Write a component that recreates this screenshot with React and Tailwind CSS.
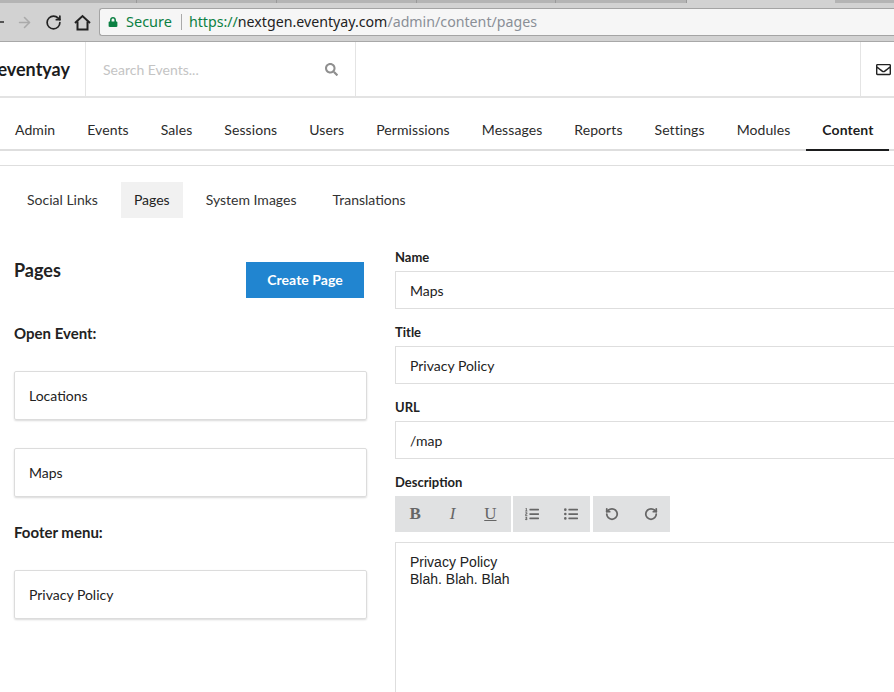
import React from 'react';
import { ArrowRight, RotateCw, RotateCcw } from 'lucide-react';
import { FaLock, FaSearch, FaRegEnvelope, FaListOl, FaListUl } from 'react-icons/fa';

const menu = ['Admin', 'Events', 'Sales', 'Sessions', 'Users', 'Permissions', 'Messages', 'Reports', 'Settings', 'Modules', 'Content'];
const subMenu = ['Social Links', 'Pages', 'System Images', 'Translations'];

const HomeIcon = () => (
    <svg width="17" height="17" viewBox="0 0 17 17" fill="none" stroke="#222" strokeWidth="2" className="ml-[12px]">
        <path d="M1 9 L8.5 2 L16 9" />
        <path d="M3.5 7.5 V15.5 H13.5 V7.5" />
    </svg>
);

const BrowserBar = () => (
    <div className="h-[42px] bg-[#d2d2d2] border-b border-[#a8a8a8]">
        <div className="h-[3px] bg-[#b4b4b4] flex">
            <div className="w-[137px] border-r border-[#9a9a9a]" />
            <div className="w-[140px] border-r border-[#9a9a9a]" />
            <div className="w-[140px] border-r border-[#9a9a9a]" />
            <div className="w-[139px] border-r border-[#9a9a9a]" />
            <div className="w-[131px] border-r border-[#9a9a9a]" />
            <div className="w-[148px] bg-[#d2d2d2]" />
        </div>
        <div className="h-[5px]" />
        <div className="h-[28px] flex items-center">
            <div className="w-[4px] h-[2px] bg-[#555]" />
            <ArrowRight size={17} strokeWidth={2.2} className="ml-[12px] text-[#aaaaaa]" />
            <RotateCw size={17} strokeWidth={2.4} className="ml-[12px] text-[#222]" />
            <HomeIcon />
            <div className="ml-[8px] flex-1 h-[28px] bg-[#f6f6f6] border border-[#a4a4a4] rounded-l-[3px] border-r-0 flex items-center font-['Noto_Sans',sans-serif] text-[14.2px]">
                <FaLock size={10} className="ml-[8px] text-[#0b8043]" />
                <span className="ml-[8px] text-[14.5px] text-[#0b8043]">Secure</span>
                <div className="ml-[9px] w-px h-[16px] bg-[#aaa]" />
                <span className="ml-[7px] text-[#0b8043]">https://</span>
                <span className="text-[#222]">nextgen.eventyay.com</span>
                <span className="text-[#8a8f96]">/admin/content/pages</span>
            </div>
        </div>
    </div>
);

const TopNav = () => (
    <div className="h-[56px] flex border-b-2 border-[#e3e3e3] bg-white">
        <div className="w-[86px] shrink-0 flex items-center justify-end pr-[15px] border-r border-[#e4e4e4] overflow-hidden">
            <span className="text-[18px] font-bold text-[#1b1c1d] leading-none">eventyay</span>
        </div>
        <div className="w-[270px] shrink-0 flex items-center justify-between pl-[17px] pr-[17px] border-r border-[#e4e4e4]">
            <span className="text-[14px] text-[#c4c4c4]">Search Events...</span>
            <FaSearch size={13} className="text-[#8f8f8f]" />
        </div>
        <div className="flex-1 border-r border-[#e4e4e4]" />
        <div className="w-[33px] shrink-0 flex items-center pl-[15px]">
            <FaRegEnvelope size={15} className="text-[#222]" />
        </div>
    </div>
);

const MainMenu = () => (
    <div className="h-[53px] flex border-b-2 border-[#dedede] ml-[-1px] tracking-[0.08px]">
        {menu.map(m => (
            <div
                key={m}
                className={m === 'Content'
                    ? 'h-[53px] px-4 pt-[11px] flex items-center font-bold text-black/90 border-b-2 border-[#1b1c1d] text-[14px]'
                    : 'h-[53px] px-4 pt-[11px] flex items-center text-[#2b2b2b] border-b-2 border-transparent text-[14px]'}
            >
                {m}
            </div>
        ))}
    </div>
);

const SubMenu = () => (
    <div className="flex gap-[10px] ml-[14px] mt-[16px]">
        {subMenu.map(s => (
            <div key={s} className={s === 'Pages' ? 'h-9 px-[13px] pb-[2px] flex items-center text-[14px] text-[#222] bg-[#f1f1f1]' : 'h-9 px-[13px] pb-[2px] flex items-center text-[14px] text-[#333]'}>
                {s}
            </div>
        ))}
    </div>
);

const PageCard = ({ label }) => (
    <div className="h-[49px] flex items-center pl-[14px] text-[14px] text-[#222] border border-[#dcdcdc] rounded-[2px] shadow-[0_1px_2px_rgba(0,0,0,0.15)]">
        {label}
    </div>
);

const Field = ({ label, value }) => (
    <div className="mb-[15px]">
        <div className="h-[17px] mb-[5px] flex items-center text-[13px] font-bold text-[#222]">{label}</div>
        <div className="h-[38px] flex items-center pl-[14px] text-[14px] text-[#222] border border-[#dedede] border-r-0">{value}</div>
    </div>
);

const ToolGroup = ({ className, children }) => (
    <div className={`h-[36px] flex items-center justify-around bg-[#e0e1e2] text-[#666] ${className}`}>{children}</div>
);

const Editor = () => (
    <div>
        <div className="h-[17px] mb-[5px] flex items-center text-[13px] font-bold text-[#222]">Description</div>
        <div className="flex">
            <ToolGroup className="w-[116px] font-['Liberation_Serif',serif] text-[17px]">
                <span className="font-bold">B</span>
                <span className="italic">I</span>
                <span className="underline">U</span>
            </ToolGroup>
            <ToolGroup className="w-[77px] ml-[2px]">
                <FaListOl size={14} />
                <FaListUl size={14} />
            </ToolGroup>
            <ToolGroup className="w-[77px] ml-[3px]">
                <RotateCcw size={14} strokeWidth={3} />
                <RotateCw size={14} strokeWidth={3} />
            </ToolGroup>
        </div>
        <div className="mt-[10px] h-[200px] border border-[#dedede] border-r-0 pl-[14px] pt-[11px] font-['Liberation_Sans',sans-serif] text-[14px] leading-[17px] text-[#222]">
            <p>Privacy Policy</p>
            <p>Blah. Blah. Blah</p>
        </div>
    </div>
);

export default function App() {
    return (
        <div className="w-[894px] h-[692px] overflow-hidden bg-white font-['Lato',sans-serif]">
            <BrowserBar />
            <TopNav />
            <MainMenu />
            <div className="h-[15px] border-b border-[#dedede]" />
            <SubMenu />
            <div className="flex mt-[31px] ml-[14px]">
                <div className="w-[353px] shrink-0">
                    <div className="flex justify-between items-start pt-[13px] pr-[3px]">
                        <h2 className="mt-[-5px] text-[18px] font-bold text-[#222]">Pages</h2>
                        <button className="w-[118px] h-9 pb-[2px] bg-[#2185d0] text-white text-[14px] font-bold tracking-[0.05px]">Create Page</button>
                    </div>
                    <div className="mt-[25px] text-[15px] font-bold text-[#222] leading-[20px]">Open Event:</div>
                    <div className="mt-[28px]"><PageCard label="Locations" /></div>
                    <div className="mt-[28px]"><PageCard label="Maps" /></div>
                    <div className="mt-[25px] text-[15px] font-bold text-[#222] leading-[20px]">Footer menu:</div>
                    <div className="mt-[28px]"><PageCard label="Privacy Policy" /></div>
                </div>
                <div className="flex-1 ml-[28px]">
                    <Field label="Name" value="Maps" />
                    <Field label="Title" value="Privacy Policy" />
                    <Field label="URL" value="/map" />
                    <Editor />
                </div>
            </div>
        </div>
    );
}
